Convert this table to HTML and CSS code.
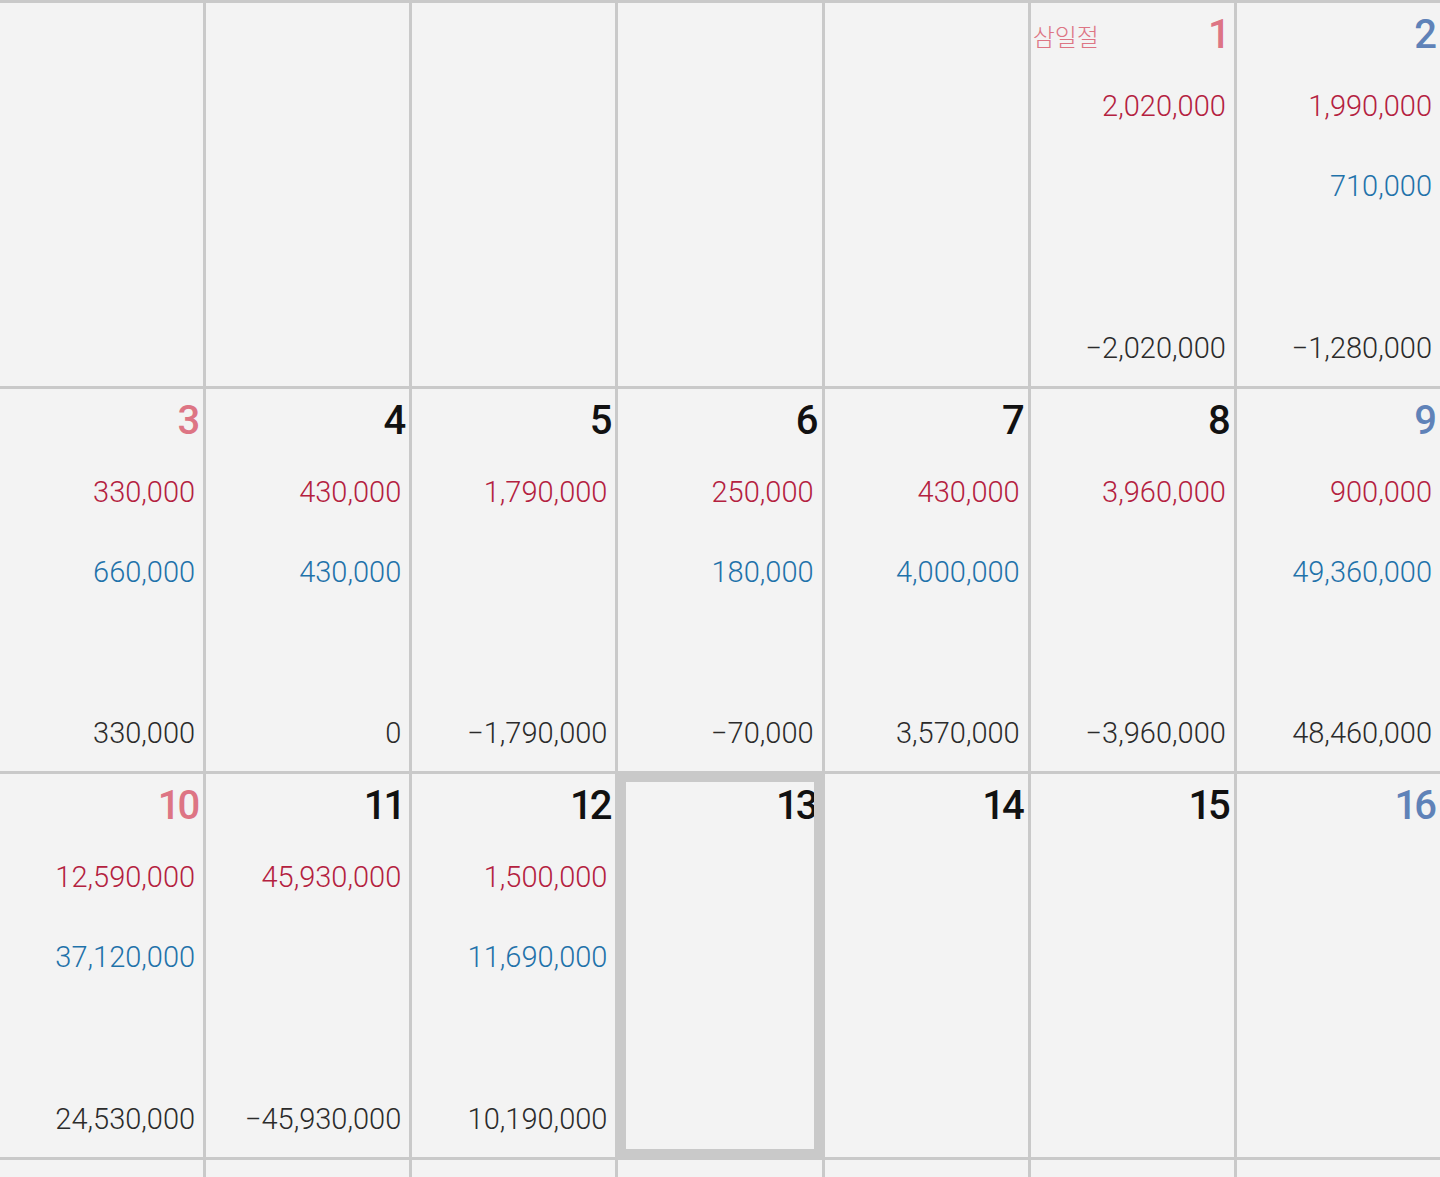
FILE: index.html
```html
<!DOCTYPE html>
<html lang="ko">
<head>
<meta charset="utf-8">
<title>달력</title>
<link rel="stylesheet" href="styles.css">
</head>
<body>
<div class="calendar">
  <div class="cell"></div>
  <div class="cell"></div>
  <div class="cell"></div>
  <div class="cell"></div>
  <div class="cell"></div>
  <div class="cell">
    <div class="head"><span class="label">삼일절</span><span class="date red">1</span></div>
    <div class="amt income">2,020,000</div>
    <div class="amt expense"></div>
    <div class="amt total">−2,020,000</div>
  </div>
  <div class="cell">
    <div class="head"><span class="date blue">2</span></div>
    <div class="amt income">1,990,000</div>
    <div class="amt expense">710,000</div>
    <div class="amt total">−1,280,000</div>
  </div>

  <div class="cell">
    <div class="head"><span class="date red">3</span></div>
    <div class="amt income">330,000</div>
    <div class="amt expense">660,000</div>
    <div class="amt total">330,000</div>
  </div>
  <div class="cell">
    <div class="head"><span class="date">4</span></div>
    <div class="amt income">430,000</div>
    <div class="amt expense">430,000</div>
    <div class="amt total">0</div>
  </div>
  <div class="cell">
    <div class="head"><span class="date">5</span></div>
    <div class="amt income">1,790,000</div>
    <div class="amt expense"></div>
    <div class="amt total">−1,790,000</div>
  </div>
  <div class="cell">
    <div class="head"><span class="date">6</span></div>
    <div class="amt income">250,000</div>
    <div class="amt expense">180,000</div>
    <div class="amt total">−70,000</div>
  </div>
  <div class="cell">
    <div class="head"><span class="date">7</span></div>
    <div class="amt income">430,000</div>
    <div class="amt expense">4,000,000</div>
    <div class="amt total">3,570,000</div>
  </div>
  <div class="cell">
    <div class="head"><span class="date">8</span></div>
    <div class="amt income">3,960,000</div>
    <div class="amt expense"></div>
    <div class="amt total">−3,960,000</div>
  </div>
  <div class="cell">
    <div class="head"><span class="date blue">9</span></div>
    <div class="amt income">900,000</div>
    <div class="amt expense">49,360,000</div>
    <div class="amt total">48,460,000</div>
  </div>

  <div class="cell">
    <div class="head"><span class="date red">10</span></div>
    <div class="amt income">12,590,000</div>
    <div class="amt expense">37,120,000</div>
    <div class="amt total">24,530,000</div>
  </div>
  <div class="cell">
    <div class="head"><span class="date">11</span></div>
    <div class="amt income">45,930,000</div>
    <div class="amt expense"></div>
    <div class="amt total">−45,930,000</div>
  </div>
  <div class="cell">
    <div class="head"><span class="date">12</span></div>
    <div class="amt income">1,500,000</div>
    <div class="amt expense">11,690,000</div>
    <div class="amt total">10,190,000</div>
  </div>
  <div class="cell selected">
    <div class="head"><span class="date">13</span></div>
  </div>
  <div class="cell">
    <div class="head"><span class="date">14</span></div>
  </div>
  <div class="cell">
    <div class="head"><span class="date">15</span></div>
  </div>
  <div class="cell">
    <div class="head"><span class="date blue">16</span></div>
  </div>

  <div class="cell"></div>
  <div class="cell"></div>
  <div class="cell"></div>
  <div class="cell"></div>
  <div class="cell"></div>
  <div class="cell"></div>
  <div class="cell"></div>
</div>
</body>
</html>
```

FILE: styles.css
```css
html, body {
  margin: 0;
  padding: 0;
  height: 1177px;
  overflow: hidden;
  background: #c9c9c9;
}

.calendar {
  display: grid;
  grid-template-columns: repeat(7, 1fr);
  grid-auto-rows: 382.67px;
  gap: 3px;
  padding-top: 3px;
  width: 1440px;
  height: 1177px;
  box-sizing: border-box;
  overflow: hidden;
  background: #c9c9c9;
  font-family: Roboto, "Noto Sans", "Noto Sans CJK KR", sans-serif;
}

.cell {
  position: relative;
  background: #f3f3f3;
  display: flex;
  flex-direction: column;
  padding: 10px 8px 23px 2px;
  overflow: hidden;
  box-sizing: border-box;
}

.head {
  height: 44px;
  display: flex;
  align-items: center;
  justify-content: flex-end;
  margin-right: -5px;
}

.label {
  margin-right: auto;
  font-family: "Noto Sans CJK KR", sans-serif;
  font-weight: 300;
  font-size: 24px;
  color: #dd7584;
}

.date {
  font-size: 40px;
  font-weight: 500;
  line-height: 44px;
  letter-spacing: -3px;
  padding-right: 3px;
  color: #111;
}

.date.red { color: #dd7584; }
.date.blue { color: #5f82b8; }

.amt {
  height: 30px;
  line-height: 30px;
  font-size: 29px;
  font-weight: 300;
  text-align: right;
  white-space: nowrap;
}

.income {
  margin-top: 34px;
  color: #b4213f;
}

.expense {
  margin-top: 50px;
  color: #1f72aa;
}

.total {
  margin-top: auto;
  color: #2b2b2b;
}

.selected::after {
  content: "";
  position: absolute;
  inset: 0;
  border: 8px solid #c9c9c9;
  pointer-events: none;
}
```
